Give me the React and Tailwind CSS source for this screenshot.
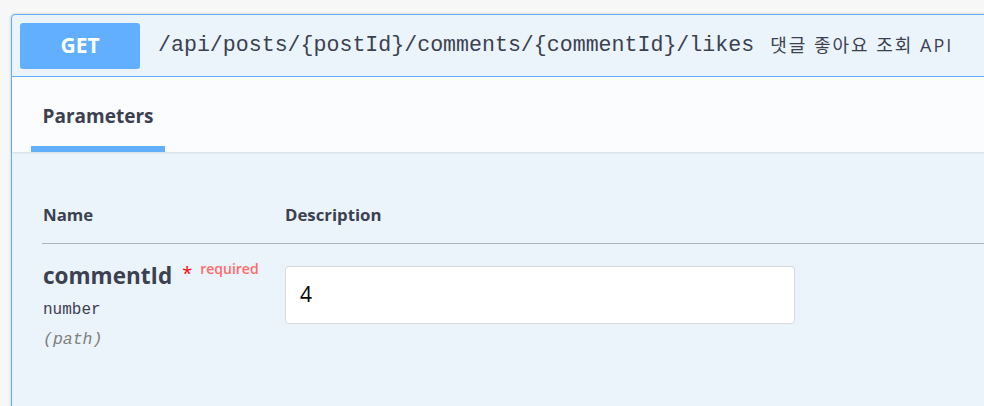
import React from 'react';

const sans = 'font-["Open_Sans","Noto_Sans_CJK_KR",sans-serif]';
const mono = 'font-["Liberation_Mono","Noto_Sans_CJK_KR",monospace]';

const App = () => {
  return (
    <div className={`h-[406px] w-[984px] overflow-hidden bg-[#f7f7f7] pt-[14px] pl-[11px] ${sans}`}>
      <div className="w-[1100px] h-[420px] rounded-[4px] border border-[#61affe] bg-[#ebf3fb] shadow-[0_0_3px_rgba(0,0,0,0.19)]">
        {/* Summary */}
        <div className="flex items-center h-[62px] border-b border-[#61affe] pl-[8px]">
          <div className="flex items-center justify-center w-[120px] h-[46px] rounded-[3px] bg-[#61affe] text-white text-[21px] font-bold">
            GET
          </div>
          <span className={`ml-[18px] text-[21.6px] text-[#3b4151] ${mono}`}>
            /api/posts/{'{postId}'}/comments/{'{commentId}'}/likes
          </span>
          <span className="ml-[16px] text-[18px] tracking-[2px] text-[#3b4151]">댓글 좋아요 조회 API</span>
        </div>

        {/* Tab header */}
        <div className="flex items-end h-[75px] bg-[#fafcfe] shadow-[0_1px_2px_rgba(0,0,0,0.1)] pl-[19px]">
          <div className="flex flex-col items-center w-[134px]">
            <span className="text-[19px] font-bold text-[#3b4151] leading-none">Parameters</span>
            <div className="mt-[20px] w-full h-[6px] bg-[#61affe]" />
          </div>
        </div>

        {/* Parameters table */}
        <div className="pl-[30px] pt-[50px]">
          <div className="flex h-[42px] border-b border-[#a9b3c1] text-[16.8px] font-bold text-[#3b4151]">
            <div className="w-[243px] pl-px">Name</div>
            <div>Description</div>
          </div>
          <div className="flex pt-[14px]">
            <div className="w-[243px] pl-px pt-[2px]">
              <div className="flex items-start">
                <span className="text-[22.5px] font-bold text-[#3b4151] leading-[32px]">commentId</span>
                <span className="ml-[10px] mt-[4px] text-[18px] text-[#ff0000] leading-none">*</span>
                <span className="ml-[8px] mt-[2px] text-[14px] font-semibold text-[#ff6b6b] leading-none">required</span>
              </div>
              <div className={`mt-[6px] text-[16px] text-[#3b4151] ${mono}`}>number</div>
              <div className={`mt-[6px] text-[16.5px] italic text-[#808080] ${mono}`}>(path)</div>
            </div>
            <div className="pt-[8px]">
              <div className="flex items-center w-[510px] h-[58px] rounded-[4px] border border-[#d9d9d9] bg-white pl-[14px] text-[21px] text-black">
                4
              </div>
            </div>
          </div>
        </div>
      </div>
    </div>
  );
};

export default App;
